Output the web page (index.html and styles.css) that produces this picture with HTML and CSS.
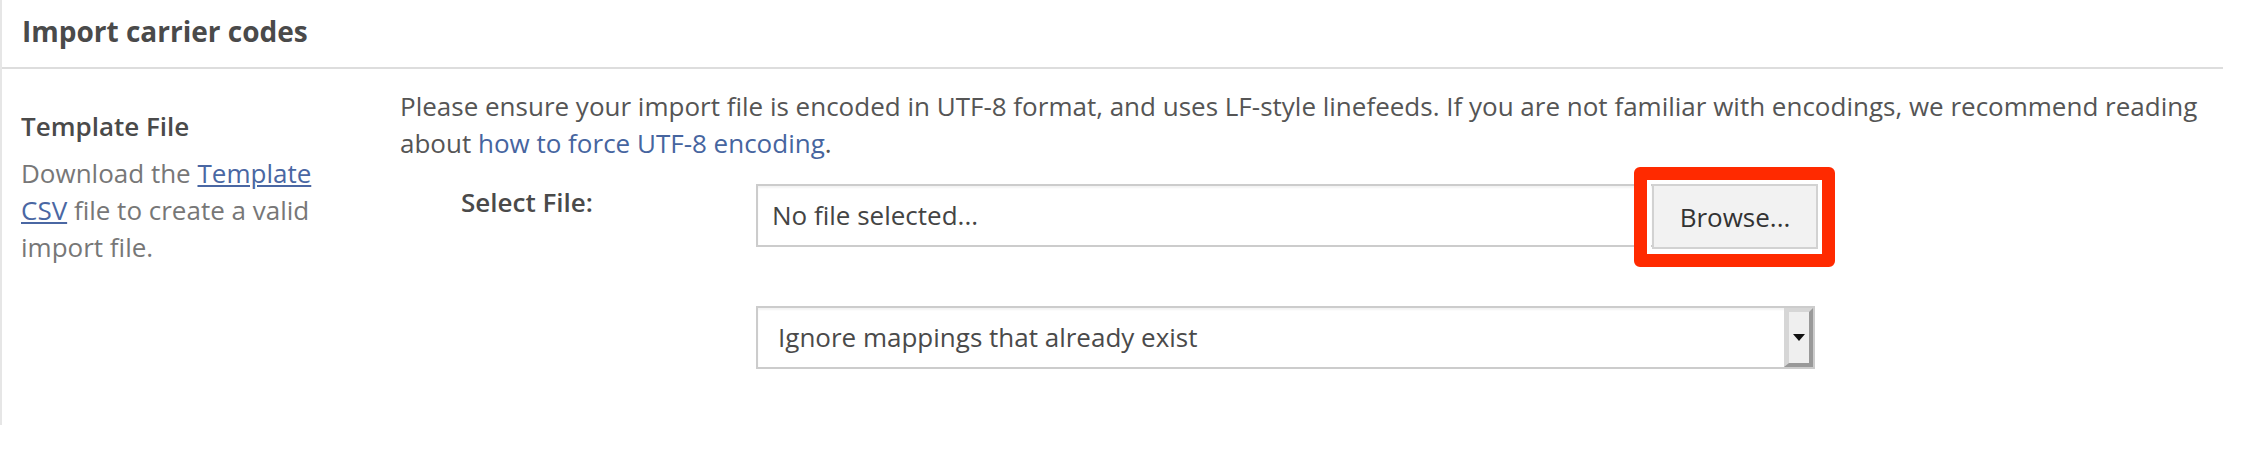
FILE: index.html
```html
<!DOCTYPE html>
<html lang="en">
<head>
  <meta charset="UTF-8" />
  <title>Import carrier codes</title>
  <link rel="stylesheet" href="styles.css">
</head>
<body>
  <div class="panel">
    <div class="panel-head">
      <h2>Import carrier codes</h2>
    </div>

    <div class="panel-body">
      <div class="side">
        <h3>Template File</h3>
        <p>Download the <a href="#">Template CSV</a> file to create a valid import file.</p>
      </div>

      <div class="main">
        <p class="note">Please ensure your import file is encoded in UTF-8 format, and uses LF-style linefeeds. If you are not familiar with encodings, we recommend reading about <a href="#">how to force UTF-8 encoding</a>.</p>

        <div class="form-row">
          <label class="row-label">Select File:</label>
          <div class="file-field">
            <span class="file-name">No file selected...</span>
            <span class="browse-wrap">
              <button class="browse-btn">Browse...</button>
              <span class="highlight"></span>
            </span>
          </div>
        </div>

        <div class="form-row select-row">
          <span class="row-label"></span>
          <div class="select-field">
            <span class="select-value">Ignore mappings that already exist</span>
            <span class="select-arrow"><span class="tri"></span></span>
          </div>
        </div>
      </div>
    </div>
  </div>
</body>
</html>
```

FILE: styles.css
```css
* {
  margin: 0;
  padding: 0;
  box-sizing: border-box;
  font-family: "Open Sans", sans-serif;
}

body {
  background: #fff;
  width: 2264px;
  height: 466px;
  overflow: hidden;
}

.panel {
  width: 2223px;
  border-left: 2px solid #e6e6e6;
}

.panel-head {
  height: 69px;
  padding: 0 20px;
  border-bottom: 2px solid #dddddd;
}

.panel-head h2 {
  font-size: 28px;
  font-weight: 700;
  line-height: 63px;
  color: #4a4a4a;
}

.panel-body {
  display: flex;
  padding: 19px 0 56px 19px;
}

.side {
  width: 332px;
  flex-shrink: 0;
  padding-top: 20px;
  font-size: 26px;
  line-height: 37px;
}

.side h3 {
  font-size: 26px;
  font-weight: 600;
  color: #4a4a4a;
  margin-bottom: 10px;
}

.side p {
  color: #777;
}

.side a {
  color: #4a67a3;
  text-decoration: underline;
}

.main {
  flex: 1;
  margin-left: 47px;
  font-size: 26px;
  line-height: 37px;
  color: #555;
}

.note a {
  color: #46659f;
  text-decoration: none;
}

.form-row {
  display: flex;
  margin-top: 22px;
}

.select-row {
  margin-top: 57px;
}

.row-label {
  width: 356px;
  flex-shrink: 0;
  padding-left: 61px;
  font-weight: 600;
  color: #4a4a4a;
}

.file-field {
  display: flex;
  width: 1062px;
}

.file-name {
  flex: 1;
  height: 63px;
  padding-left: 14px;
  line-height: 59px;
  color: #444;
  border: 2px solid #cccccc;
  border-right: none;
  box-shadow: inset 0 2px 2px rgba(0,0,0,0.05);
}

.browse-wrap {
  position: relative;
  display: flex;
}

.browse-btn {
  width: 166px;
  height: 65px;
  font-size: 26px;
  color: #333;
  background: #f2f2f2;
  border: 2px solid #d2d2d2;
}

/* red annotation box drawn over the button */
.highlight {
  position: absolute;
  top: -17px;
  left: -18px;
  right: -17px;
  bottom: -18px;
  border: 13px solid #ff2a00;
  border-radius: 6px;
  box-shadow: inset 0 0 0 4px #fff;
}

.select-field {
  display: flex;
  width: 1059px;
  height: 63px;
  border: 2px solid #cccccc;
  box-shadow: inset 0 2px 2px rgba(0,0,0,0.05);
}

.select-value {
  flex: 1;
  padding-left: 20px;
  line-height: 59px;
  color: #4a4a4a;
}

.select-arrow {
  width: 29px;
  display: flex;
  align-items: center;
  justify-content: center;
  background: #efefef;
  border-top: 4px solid #d6d6d6;
  border-left: 5px solid #d6d6d6;
  border-right: 4px solid #999;
  border-bottom: 4px solid #999;
}

.tri {
  width: 0;
  height: 0;
  border-left: 6px solid transparent;
  border-right: 6px solid transparent;
  border-top: 7px solid #111;
}
```
